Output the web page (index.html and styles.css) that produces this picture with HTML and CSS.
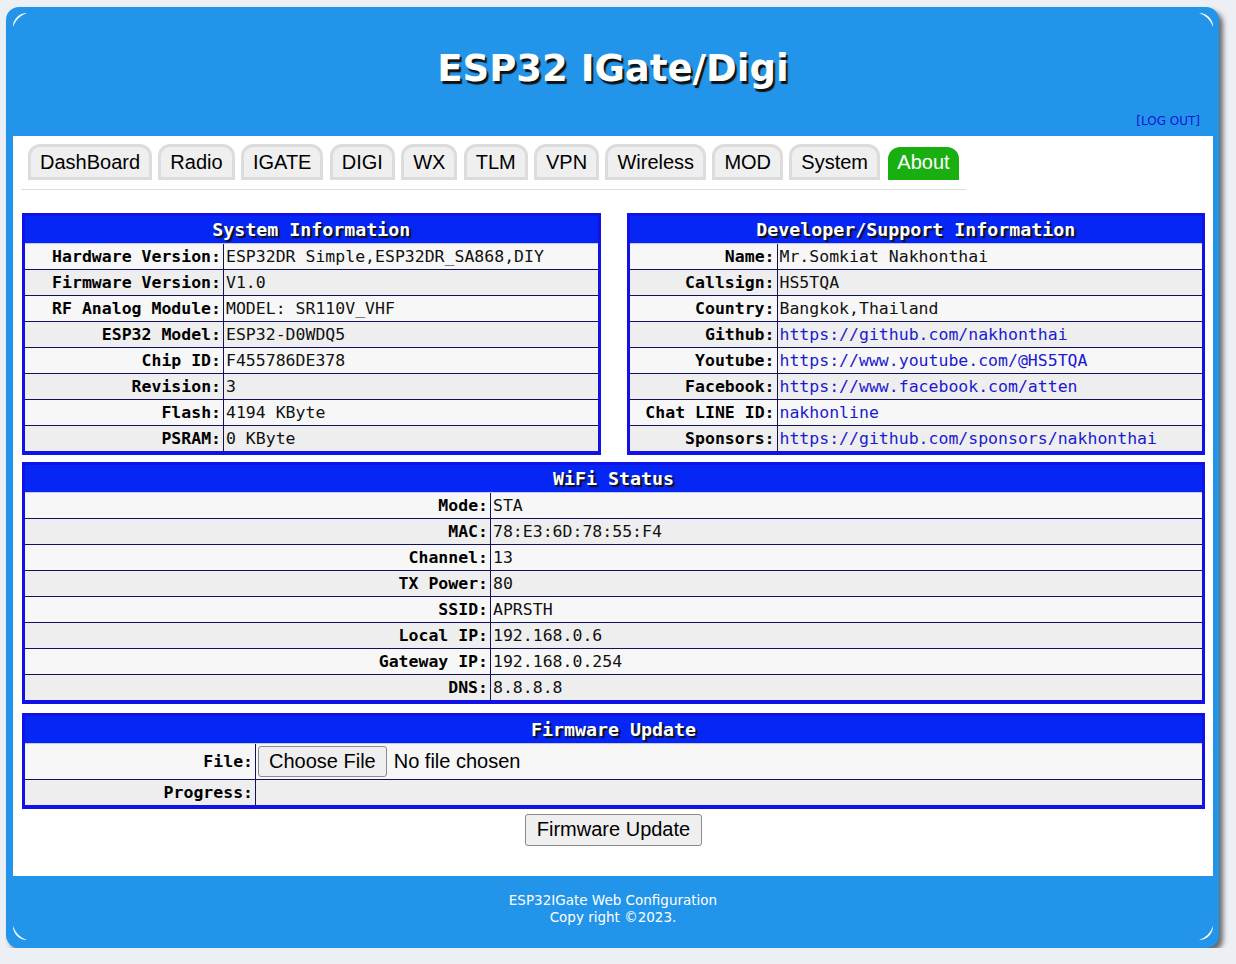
FILE: index.html
```html
<!DOCTYPE html>
<html lang="en">
<head>
<meta charset="utf-8">
<title>ESP32 IGate/Digi</title>
<link rel="stylesheet" href="styles.css">
</head>
<body>
<div class="frame">
  <svg class="corner tl" viewBox="0 0 16 16" width="16" height="16"><path d="M1 15A14 14 0 0 1 15 1A22 22 0 0 0 1 15Z"/></svg>
  <svg class="corner tr" viewBox="0 0 16 16" width="16" height="16"><path d="M1 15A14 14 0 0 1 15 1A22 22 0 0 0 1 15Z"/></svg>
  <svg class="corner bl" viewBox="0 0 16 16" width="16" height="16"><path d="M1 15A14 14 0 0 1 15 1A22 22 0 0 0 1 15Z"/></svg>
  <svg class="corner br" viewBox="0 0 16 16" width="16" height="16"><path d="M1 15A14 14 0 0 1 15 1A22 22 0 0 0 1 15Z"/></svg>

  <header class="top">
    <h1 class="title">ESP32 IGate/Digi</h1>
    <div class="logout"><a href="#">[LOG OUT]</a></div>
  </header>

  <main class="main">
    <nav class="tabs">
      <a class="tab" href="#">DashBoard</a>
      <a class="tab" href="#">Radio</a>
      <a class="tab" href="#">IGATE</a>
      <a class="tab" href="#">DIGI</a>
      <a class="tab" href="#">WX</a>
      <a class="tab" href="#">TLM</a>
      <a class="tab" href="#">VPN</a>
      <a class="tab" href="#">Wireless</a>
      <a class="tab" href="#">MOD</a>
      <a class="tab" href="#">System</a>
      <a class="tab active" href="#">About</a>
    </nav>

    <section class="content">
      <div class="pair">
        <table class="info">
          <colgroup><col class="c-sys"><col></colgroup>
          <thead><tr><th class="head" colspan="2">System Information</th></tr></thead>
          <tbody>
            <tr><td class="k">Hardware Version:</td><td class="v">ESP32DR Simple,ESP32DR_SA868,DIY</td></tr>
            <tr><td class="k">Firmware Version:</td><td class="v">V1.0</td></tr>
            <tr><td class="k">RF Analog Module:</td><td class="v">MODEL: SR110V_VHF</td></tr>
            <tr><td class="k">ESP32 Model:</td><td class="v">ESP32-D0WDQ5</td></tr>
            <tr><td class="k">Chip ID:</td><td class="v">F455786DE378</td></tr>
            <tr><td class="k">Revision:</td><td class="v">3</td></tr>
            <tr><td class="k">Flash:</td><td class="v">4194 KByte</td></tr>
            <tr><td class="k">PSRAM:</td><td class="v">0 KByte</td></tr>
          </tbody>
        </table>

        <table class="info">
          <colgroup><col class="c-dev"><col></colgroup>
          <thead><tr><th class="head" colspan="2">Developer/Support Information</th></tr></thead>
          <tbody>
            <tr><td class="k">Name:</td><td class="v">Mr.Somkiat Nakhonthai</td></tr>
            <tr><td class="k">Callsign:</td><td class="v">HS5TQA</td></tr>
            <tr><td class="k">Country:</td><td class="v">Bangkok,Thailand</td></tr>
            <tr><td class="k">Github:</td><td class="v"><a href="#">https://github.com/nakhonthai</a></td></tr>
            <tr><td class="k">Youtube:</td><td class="v"><a href="#">https://www.youtube.com/@HS5TQA</a></td></tr>
            <tr><td class="k">Facebook:</td><td class="v"><a href="#">https://www.facebook.com/atten</a></td></tr>
            <tr><td class="k">Chat LINE ID:</td><td class="v"><a href="#">nakhonline</a></td></tr>
            <tr><td class="k">Sponsors:</td><td class="v"><a href="#">https://github.com/sponsors/nakhonthai</a></td></tr>
          </tbody>
        </table>
      </div>

      <table class="info wifi">
        <colgroup><col class="c-wifi"><col></colgroup>
        <thead><tr><th class="head" colspan="2">WiFi Status</th></tr></thead>
        <tbody>
          <tr><td class="k">Mode:</td><td class="v">STA</td></tr>
          <tr><td class="k">MAC:</td><td class="v">78:E3:6D:78:55:F4</td></tr>
          <tr><td class="k">Channel:</td><td class="v">13</td></tr>
          <tr><td class="k">TX Power:</td><td class="v">80</td></tr>
          <tr><td class="k">SSID:</td><td class="v">APRSTH</td></tr>
          <tr><td class="k">Local IP:</td><td class="v">192.168.0.6</td></tr>
          <tr><td class="k">Gateway IP:</td><td class="v">192.168.0.254</td></tr>
          <tr><td class="k">DNS:</td><td class="v">8.8.8.8</td></tr>
        </tbody>
      </table>

      <table class="info fw">
        <colgroup><col class="c-fw"><col></colgroup>
        <thead><tr><th class="head" colspan="2">Firmware Update</th></tr></thead>
        <tbody>
          <tr class="file-row"><td class="k">File:</td><td class="v"><input class="file" type="file"></td></tr>
          <tr><td class="k">Progress:</td><td class="v"></td></tr>
        </tbody>
      </table>

      <div class="actions"><button class="btn" type="button">Firmware Update</button></div>
    </section>
  </main>

  <footer class="foot">
    <div>ESP32IGate Web Configuration</div>
    <div>Copy right ©2023.</div>
  </footer>
</div>
</body>
</html>
```

FILE: styles.css
```css
html, body {
  margin: 0;
  padding: 0;
}

body {
  background: #eceff4;
  font-family: "DejaVu Sans", Verdana, sans-serif;
  color: #000;
}

.frame {
  position: relative;
  box-sizing: border-box;
  width: 1213px;
  margin: 7px 0 0 6px;
  padding: 0 6px 0 7px;
  background: #2295eb;
  border-radius: 13px;
  box-shadow: 4px 4px 5px #6a6a6a;
}

.corner {
  position: absolute;
  fill: #fff;
  z-index: 2;
}
.corner.tl { left: 6px; top: 5px; }
.corner.tr { right: 5px; top: 5px; transform: scaleX(-1); }
.corner.bl { left: 6px; bottom: 7px; transform: scaleY(-1); }
.corner.br { right: 5px; bottom: 7px; transform: scale(-1, -1); }

/* header */
.top {
  padding: 40px 13px 7px;
}

.title {
  margin: 0;
  text-align: center;
  font-family: "DejaVu Sans", Verdana, sans-serif;
  font-weight: bold;
  font-size: 37px;
  line-height: 44px;
  color: #fff;
  text-shadow: 2px 3px 1px #111;
}

.logout {
  margin-top: 22px;
  text-align: right;
  font-size: 12px;
  line-height: 16px;
}
.logout a {
  color: #1414d6;
  text-decoration: none;
}

/* main white area */
.main {
  background: #fff;
  padding: 0 8px 30px;
}

.tabs {
  display: flex;
  gap: 6.3px;
  width: fit-content;
  padding: 8px 7px 9px;
  border-bottom: 1px solid #dcdcdc;
  font-family: "Liberation Sans", Arial, sans-serif;
  font-size: 20px;
}

.tab {
  display: block;
  padding: 0 9px;
  line-height: 30px;
  background: #efefef;
  border: 3px solid #dcdcdc;
  border-radius: 12px 12px 0 0;
  color: #000;
  text-decoration: none;
}

.tab.active {
  border: 0;
  margin-top: 3px;
  margin-left: 2px;
  line-height: 31px;
  background: #1aaf10;
  color: #fff;
}

.content {
  margin: 23px 0 0 1px;
}

.pair {
  display: grid;
  grid-template-columns: 1fr 1fr;
  column-gap: 26px;
  margin-bottom: 7px;
}

/* information tables */
.info {
  width: 100%;
  table-layout: fixed;
  border-collapse: separate;
  border-spacing: 0;
  border: 3px solid #1111e8;
  font-family: "DejaVu Sans Mono", "Liberation Mono", monospace;
  font-size: 16.5px;
}

.c-sys { width: 199px; }
.c-dev { width: 148px; }
.c-wifi { width: 466px; }
.c-fw { width: 231px; }

.info .head {
  padding: 0;
  background: #0526f5;
  color: #fff;
  font-size: 18.3px;
  font-weight: bold;
  line-height: 27px;
  text-align: center;
  border-bottom: 1px solid #c8c8ee;
  text-shadow: 2px 2px 1px #111;
}

.info td {
  padding: 0 2px;
  line-height: 25px;
  border-bottom: 1px solid #12125c;
  white-space: nowrap;
  overflow: hidden;
  color: #111;
}

.info tbody tr:last-child td {
  border-bottom-color: #1111e8;
}

.info tbody tr:nth-child(odd) td { background: #f7f7f7; }
.info tbody tr:nth-child(even) td { background: #eeeeee; }

.info td.k {
  text-align: right;
  font-weight: bold;
  color: #000;
  border-right: 1px solid #12125c;
}

.info td.v a {
  color: #1a1ad0;
  text-decoration: none;
}

.wifi {
  margin-bottom: 9px;
}

.fw .file-row td {
  padding-top: 2px;
  padding-bottom: 2px;
}

.file {
  font-family: "Liberation Sans", Arial, sans-serif;
  font-size: 20px;
  color: #000;
  vertical-align: middle;
}

.file::file-selector-button {
  font-family: "Liberation Sans", Arial, sans-serif;
  font-size: 20px;
  padding: 3px 10px;
  margin: 0 7px 0 0;
  border: 1px solid #8a8a8a;
  border-radius: 3px;
  background: #efefef;
  color: #000;
}

.actions {
  margin-top: 5px;
  text-align: center;
}

.btn {
  font-family: "Liberation Sans", Arial, sans-serif;
  font-size: 20px;
  line-height: 23px;
  padding: 3px 11px 4px;
  border: 1px solid #8a8a8a;
  border-radius: 3px;
  background: #efefef;
  color: #000;
}

/* footer */
.foot {
  padding: 16px 0 22px;
  text-align: center;
  color: #fff;
  font-size: 13.5px;
  line-height: 17px;
}
```
